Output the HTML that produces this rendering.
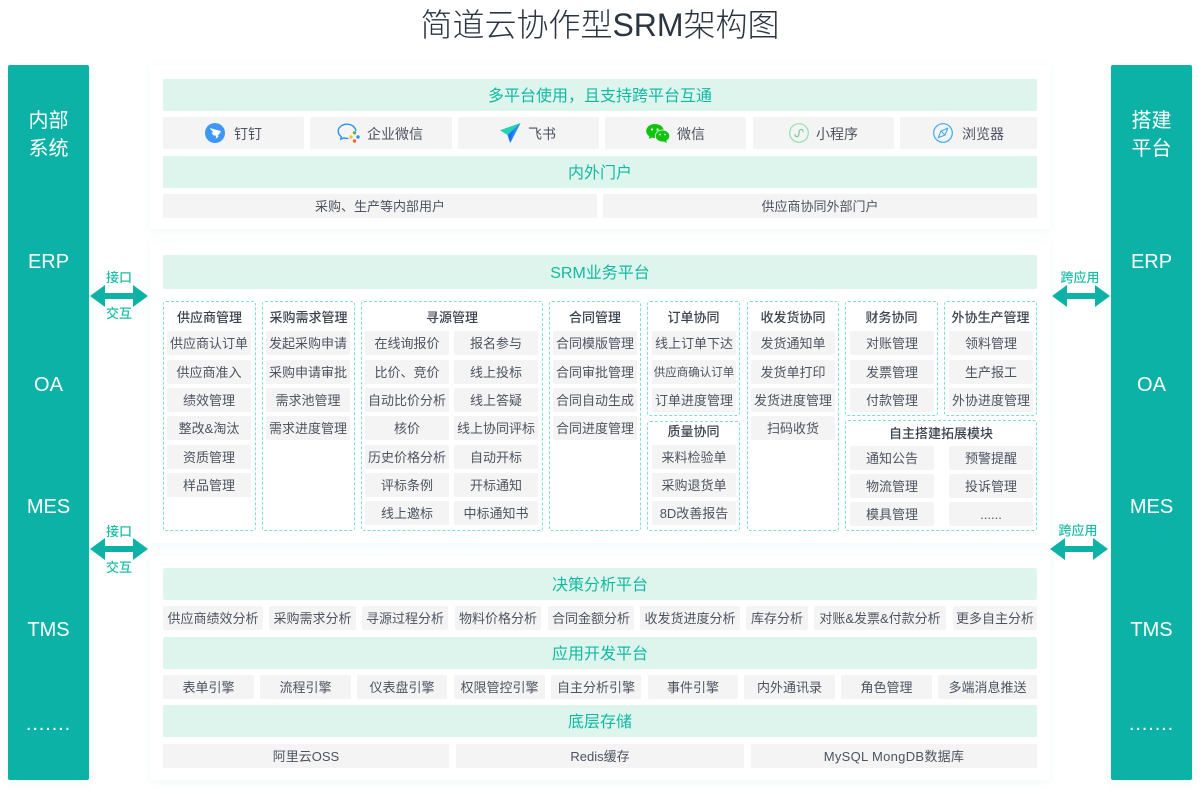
<!DOCTYPE html>
<html lang="zh-CN">
<head>
<meta charset="utf-8">
<title>简道云协作型SRM架构图</title>
<style>
html,body{margin:0;padding:0;background:#fff}
body{position:relative;width:1200px;height:790px;overflow:hidden;font-family:"Liberation Sans","Noto Sans CJK SC",sans-serif;color:#4c5361}
div,span,svg{position:absolute;box-sizing:border-box}
.t{left:0;top:0;width:1200px;text-align:center;font-size:32px;line-height:50px;color:#2b3541;font-weight:300;white-space:nowrap}
.bar{top:65px;width:81px;height:715px;background:#0db2a6;border-radius:2px;box-shadow:0 3px 10px rgba(20,170,150,.08)}
.s{left:0;width:81px;text-align:center;color:#fff;font-size:20px;line-height:28px;white-space:nowrap}
.p{left:150px;width:900px;background:#fff;box-shadow:0 2px 10px rgba(30,170,150,.07);border-radius:2px}
.h{left:163px;width:874px;padding-top:2px;background:#def5ee;border-radius:2px;text-align:center;color:#12b9a1;font-size:16px;font-weight:400;white-space:nowrap}
.c{background:#f4f4f4;border-radius:2px;height:24px;line-height:26px;font-size:13px;text-align:center;white-space:nowrap;color:#4c5361}
.b{top:117px;height:32px}
.d{border:1px dashed #7fdfcd;border-radius:3px}
.n{text-align:center;font-size:13px;line-height:20px;height:20px;font-weight:500;color:#3b4350;white-space:nowrap}
.i{height:24px;line-height:26px;width:84px}
.l{font-size:14px;line-height:20px;top:124px;color:#4c5361;white-space:nowrap}
.a{text-align:center;font-size:13px;line-height:18px;color:#1bbda6;white-space:nowrap;font-weight:500}
</style>
</head>
<body>
<div class="t">简道云协作型SRM架构图</div>

<div class="bar" style="left:8px">
<div class="s" style="top:42px">内部</div><div class="s" style="top:70px">系统</div>
<div class="s" style="top:183px">ERP</div><div class="s" style="top:306px">OA</div><div class="s" style="top:428px">MES</div><div class="s" style="top:551px">TMS</div><div class="s" style="top:645px;letter-spacing:.9px">.......</div>
</div>
<div class="bar" style="left:1111px">
<div class="s" style="top:42px">搭建</div><div class="s" style="top:70px">平台</div>
<div class="s" style="top:183px">ERP</div><div class="s" style="top:306px">OA</div><div class="s" style="top:428px">MES</div><div class="s" style="top:551px">TMS</div><div class="s" style="top:645px;letter-spacing:.9px">.......</div>
</div>

<div class="p" style="top:65px;height:164px"></div>
<div class="p" style="top:243px;height:300px"></div>
<div class="p" style="top:556px;height:224px"></div>

<div class="h" style="top:79px;height:32px;line-height:32px">多平台使用，且支持跨平台互通</div>
<div class="c b" style="left:163px;width:141px"></div>
<div class="c b" style="left:310px;width:142px"></div>
<div class="c b" style="left:458px;width:141px"></div>
<div class="c b" style="left:605px;width:141px"></div>
<div class="c b" style="left:753px;width:141px"></div>
<div class="c b" style="left:900px;width:137px"></div>
<span class="l" style="left:234px">钉钉</span>
<span class="l" style="left:367px">企业微信</span>
<span class="l" style="left:528px">飞书</span>
<span class="l" style="left:677px">微信</span>
<span class="l" style="left:816px">小程序</span>
<span class="l" style="left:962px">浏览器</span>

<svg style="left:205px;top:123px" width="20" height="20" viewBox="0 0 20 20"><circle cx="10" cy="10" r="10" fill="#3c97f6"/><path d="M4.5 5 L15.8 8 C15.5 9.5 14.5 11 13 12.2 L13.4 13.8 L10.8 15.8 L11 12.8 L8.3 12.2 L6.3 9.6 L8.3 9.4 Z" fill="#fff"/></svg>
<svg style="left:337px;top:123px" width="24" height="21" viewBox="0 0 24 21"><path d="M10 1.2 C5 1.2 1.2 4.3 1.2 8.3 C1.2 10.6 2.5 12.5 4.3 13.8 L3.8 16.2 L6.8 14.9 C8 15.3 9.3 15.5 10.8 15.4 M18.9 7.5 C18 3.8 14.5 1.2 10 1.2" fill="none" stroke="#2d8ff0" stroke-width="1.4" stroke-linecap="round"/><circle cx="17.5" cy="9.8" r="1.7" fill="#4fb84a"/><circle cx="21" cy="14" r="1.7" fill="#2d8ff0"/><circle cx="17.5" cy="18" r="1.7" fill="#f0662e"/><circle cx="14" cy="14" r="1.7" fill="#f6c21c"/></svg>
<svg style="left:500px;top:123px" width="21" height="20" viewBox="0 0 21 20"><path d="M0 7.2 L20.5 0 L7.5 12 Z" fill="#1ed6b2"/><path d="M20.5 0 L7.5 12 L10.2 20 Z" fill="#1a72f0"/><path d="M20.5 0 L14 6 L10.2 20 Z" fill="#2b8cf5"/></svg>
<svg style="left:646px;top:124px" width="24" height="19" viewBox="0 0 24 19"><ellipse cx="9" cy="7" rx="8.8" ry="7" fill="#0fc40f"/><path d="M3.5 11.5 L3 15 L7 13 Z" fill="#0fc40f"/><ellipse cx="16.5" cy="12" rx="7.2" ry="6" fill="#0fc40f" stroke="#f4f4f4" stroke-width=".8"/><path d="M20 16.5 L21 19 L17.5 17.5 Z" fill="#0fc40f"/><circle cx="6" cy="5.5" r="1.1" fill="#f4f4f4"/><circle cx="11.5" cy="5.5" r="1.1" fill="#f4f4f4"/><circle cx="14" cy="10.5" r=".9" fill="#f4f4f4"/><circle cx="19" cy="10.5" r=".9" fill="#f4f4f4"/></svg>
<svg style="left:789px;top:123px" width="20" height="20" viewBox="0 0 20 20"><circle cx="10" cy="10" r="9.3" fill="none" stroke="#8ee2ae" stroke-width="1.2"/><path d="M6 11.5 C5.6 14 9.3 14.6 9.8 11.6 L10.2 8.4 C10.7 5.6 14.4 6 14 8.5" fill="none" stroke="#7bc8a0" stroke-width="1.2" stroke-linecap="round"/></svg>
<svg style="left:933px;top:123px" width="20" height="20" viewBox="0 0 20 20"><circle cx="10" cy="10" r="9.3" fill="none" stroke="#3fa9ea" stroke-width="1.2"/><path d="M14.8 5.2 L12 12 L5.2 14.8 L8 8 Z M8 8 L12 12" fill="none" stroke="#3fa9ea" stroke-width="1.1" stroke-linejoin="round"/></svg>

<div class="h" style="top:156px;height:32px;line-height:32px">内外门户</div>
<div class="c" style="left:163px;top:194px;width:434px">采购、生产等内部用户</div>
<div class="c" style="left:603px;top:194px;width:434px">供应商协同外部门户</div>

<div class="h" style="top:255px;height:34px;line-height:34px">SRM业务平台</div>

<div class="d" style="left:163px;top:301px;width:93px;height:230px"></div>
<div class="d" style="left:262px;top:301px;width:93px;height:230px"></div>
<div class="d" style="left:361px;top:301px;width:182px;height:230px"></div>
<div class="d" style="left:549px;top:301px;width:92px;height:230px"></div>
<div class="d" style="left:647px;top:301px;width:93px;height:115px"></div>
<div class="d" style="left:647px;top:421px;width:93px;height:110px"></div>
<div class="d" style="left:747px;top:301px;width:92px;height:230px"></div>
<div class="d" style="left:845px;top:301px;width:93px;height:115px"></div>
<div class="d" style="left:944px;top:301px;width:93px;height:115px"></div>
<div class="d" style="left:845px;top:420px;width:192px;height:111px"></div>

<div class="n" style="left:163px;top:308px;width:93px">供应商管理</div>
<div class="c i" style="left:167px;top:331px">供应商认订单</div>
<div class="c i" style="left:167px;top:360px">供应商准入</div>
<div class="c i" style="left:167px;top:388px">绩效管理</div>
<div class="c i" style="left:167px;top:416px">整改&amp;淘汰</div>
<div class="c i" style="left:167px;top:445px">资质管理</div>
<div class="c i" style="left:167px;top:473px">样品管理</div>

<div class="n" style="left:262px;top:308px;width:93px">采购需求管理</div>
<div class="c i" style="left:266px;top:331px">发起采购申请</div>
<div class="c i" style="left:266px;top:360px">采购申请审批</div>
<div class="c i" style="left:266px;top:388px">需求池管理</div>
<div class="c i" style="left:266px;top:416px">需求进度管理</div>

<div class="n" style="left:361px;top:308px;width:182px">寻源管理</div>
<div class="c i" style="left:365px;top:331px">在线询报价</div>
<div class="c i" style="left:365px;top:360px">比价、竞价</div>
<div class="c i" style="left:365px;top:388px">自动比价分析</div>
<div class="c i" style="left:365px;top:416px">核价</div>
<div class="c i" style="left:365px;top:445px">历史价格分析</div>
<div class="c i" style="left:365px;top:473px">评标条例</div>
<div class="c i" style="left:365px;top:501px">线上邀标</div>
<div class="c i" style="left:454px;top:331px">报名参与</div>
<div class="c i" style="left:454px;top:360px">线上投标</div>
<div class="c i" style="left:454px;top:388px">线上答疑</div>
<div class="c i" style="left:454px;top:416px">线上协同评标</div>
<div class="c i" style="left:454px;top:445px">自动开标</div>
<div class="c i" style="left:454px;top:473px">开标通知</div>
<div class="c i" style="left:454px;top:501px">中标通知书</div>

<div class="n" style="left:549px;top:308px;width:92px">合同管理</div>
<div class="c i" style="left:553px;top:331px">合同模版管理</div>
<div class="c i" style="left:553px;top:360px">合同审批管理</div>
<div class="c i" style="left:553px;top:388px">合同自动生成</div>
<div class="c i" style="left:553px;top:416px">合同进度管理</div>

<div class="n" style="left:647px;top:308px;width:93px">订单协同</div>
<div class="c i" style="left:652px;top:331px">线上订单下达</div>
<div class="c i" style="left:652px;top:360px;font-size:11.5px">供应商确认订单</div>
<div class="c i" style="left:652px;top:388px">订单进度管理</div>
<div class="n" style="left:647px;top:422px;width:93px">质量协同</div>
<div class="c i" style="left:652px;top:445px">来料检验单</div>
<div class="c i" style="left:652px;top:473px">采购退货单</div>
<div class="c i" style="left:652px;top:501px">8D改善报告</div>

<div class="n" style="left:747px;top:308px;width:92px">收发货协同</div>
<div class="c i" style="left:751px;top:331px">发货通知单</div>
<div class="c i" style="left:751px;top:360px">发货单打印</div>
<div class="c i" style="left:751px;top:388px">发货进度管理</div>
<div class="c i" style="left:751px;top:416px">扫码收货</div>

<div class="n" style="left:845px;top:308px;width:93px">财务协同</div>
<div class="c i" style="left:850px;top:331px">对账管理</div>
<div class="c i" style="left:850px;top:360px">发票管理</div>
<div class="c i" style="left:850px;top:388px">付款管理</div>

<div class="n" style="left:944px;top:308px;width:93px">外协生产管理</div>
<div class="c i" style="left:949px;top:331px">领料管理</div>
<div class="c i" style="left:949px;top:360px">生产报工</div>
<div class="c i" style="left:949px;top:388px">外协进度管理</div>

<div class="n" style="left:845px;top:424px;width:192px">自主搭建拓展模块</div>
<div class="c i" style="left:850px;top:446px">通知公告</div>
<div class="c i" style="left:850px;top:474px">物流管理</div>
<div class="c i" style="left:850px;top:502px">模具管理</div>
<div class="c i" style="left:949px;top:446px">预警提醒</div>
<div class="c i" style="left:949px;top:474px">投诉管理</div>
<div class="c i" style="left:949px;top:502px">......</div>

<div class="h" style="top:568px;height:32px;line-height:32px">决策分析平台</div>
<div class="c" style="left:163px;top:606px;width:100px">供应商绩效分析</div>
<div class="c" style="left:269px;top:606px;width:87px">采购需求分析</div>
<div class="c" style="left:362px;top:606px;width:86px">寻源过程分析</div>
<div class="c" style="left:455px;top:606px;width:86px">物料价格分析</div>
<div class="c" style="left:548px;top:606px;width:86px">合同金额分析</div>
<div class="c" style="left:640px;top:606px;width:100px">收发货进度分析</div>
<div class="c" style="left:746px;top:606px;width:62px">库存分析</div>
<div class="c" style="left:814px;top:606px;width:132px">对账&amp;发票&amp;付款分析</div>
<div class="c" style="left:953px;top:606px;width:84px">更多自主分析</div>

<div class="h" style="top:637px;height:32px;line-height:32px">应用开发平台</div>
<div class="c" style="left:163px;top:675px;width:91px">表单引擎</div>
<div class="c" style="left:260px;top:675px;width:91px">流程引擎</div>
<div class="c" style="left:357px;top:675px;width:90px">仪表盘引擎</div>
<div class="c" style="left:454px;top:675px;width:91px">权限管控引擎</div>
<div class="c" style="left:551px;top:675px;width:90px">自主分析引擎</div>
<div class="c" style="left:648px;top:675px;width:90px">事件引擎</div>
<div class="c" style="left:744px;top:675px;width:91px">内外通讯录</div>
<div class="c" style="left:841px;top:675px;width:91px">角色管理</div>
<div class="c" style="left:938px;top:675px;width:99px">多端消息推送</div>

<div class="h" style="top:705px;height:32px;line-height:32px">底层存储</div>
<div class="c" style="left:163px;top:744px;width:286px">阿里云OSS</div>
<div class="c" style="left:456px;top:744px;width:288px">Redis缓存</div>
<div class="c" style="left:751px;top:744px;width:286px;letter-spacing:.3px">MySQL MongDB数据库</div>

<svg style="left:90px;top:285px" width="58" height="22" viewBox="0 0 58 22"><path d="M0 11 L15 0 L15 8 L43 8 L43 0 L58 11 L43 22 L43 14 L15 14 L15 22 Z" fill="#0db2a6"/></svg>
<svg style="left:90px;top:538px" width="58" height="22" viewBox="0 0 58 22"><path d="M0 11 L15 0 L15 8 L43 8 L43 0 L58 11 L43 22 L43 14 L15 14 L15 22 Z" fill="#0db2a6"/></svg>
<svg style="left:1052px;top:285px" width="58" height="22" viewBox="0 0 58 22"><path d="M0 11 L15 0 L15 8 L43 8 L43 0 L58 11 L43 22 L43 14 L15 14 L15 22 Z" fill="#0db2a6"/></svg>
<svg style="left:1050px;top:538px" width="58" height="22" viewBox="0 0 58 22"><path d="M0 11 L15 0 L15 8 L43 8 L43 0 L58 11 L43 22 L43 14 L15 14 L15 22 Z" fill="#0db2a6"/></svg>

<div class="a" style="left:89px;top:269px;width:60px">接口</div>
<div class="a" style="left:89px;top:305px;width:60px">交互</div>
<div class="a" style="left:89px;top:523px;width:60px">接口</div>
<div class="a" style="left:89px;top:559px;width:60px">交互</div>
<div class="a" style="left:1050px;top:269px;width:60px">跨应用</div>
<div class="a" style="left:1048px;top:522px;width:60px">跨应用</div>
</body>
</html>
